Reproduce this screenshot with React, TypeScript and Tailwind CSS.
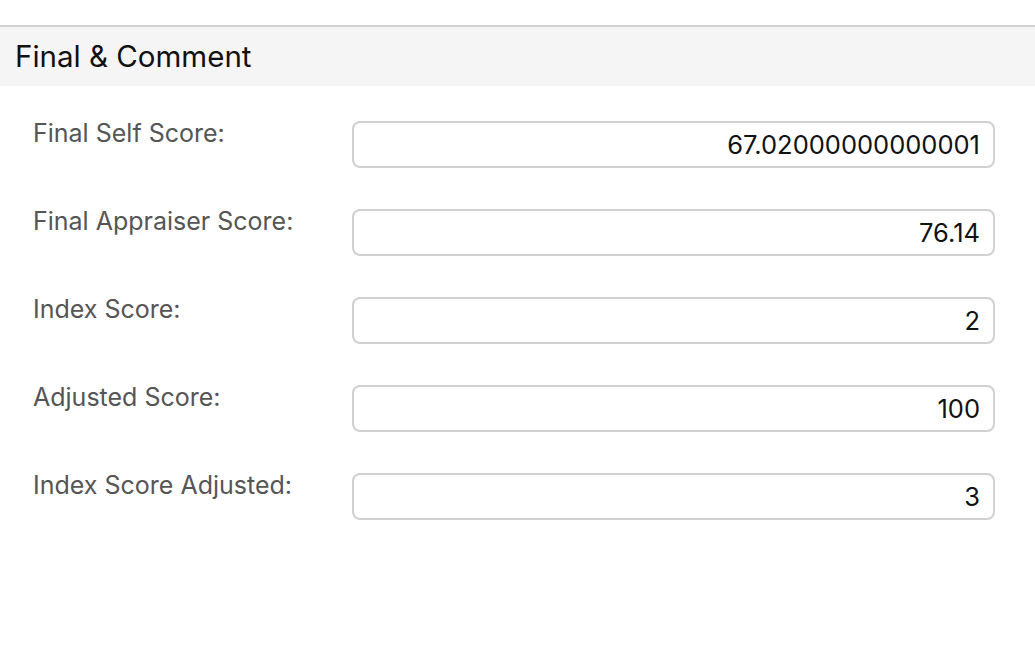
const rows = [
  { label: "Final Self Score:", value: "67.02000000000001" },
  { label: "Final Appraiser Score:", value: "76.14" },
  { label: "Index Score:", value: "2" },
  { label: "Adjusted Score:", value: "100" },
  { label: "Index Score Adjusted:", value: "3" },
];

export default function App() {
  return (
    <div className="min-h-[658px] w-[1035px] bg-white font-['Inter',sans-serif]">
      <div className="h-[25px]" />
      <div className="border-t-2 border-[#d3d3d3] bg-[#f5f5f5] h-[61px] flex items-center px-[15px]">
        <h2 className="text-[29.5px] text-[#111] leading-none">Final & Comment</h2>
      </div>
      <div className="flex flex-col gap-[41px] pt-[35px] pl-[33px] pr-[40px]">
        {rows.map((row) => (
          <div key={row.label} className="flex items-start">
            <label className="w-[319px] text-[25px] text-[#555] leading-none">
              {row.label}
            </label>
            <input
              readOnly
              value={row.value}
              className="flex-1 h-[47px] border-2 border-[#d0d0d0] rounded-[8px] text-right pr-[13px] text-[25.5px] text-[#111] bg-white outline-none"
            />
          </div>
        ))}
      </div>
    </div>
  );
}
